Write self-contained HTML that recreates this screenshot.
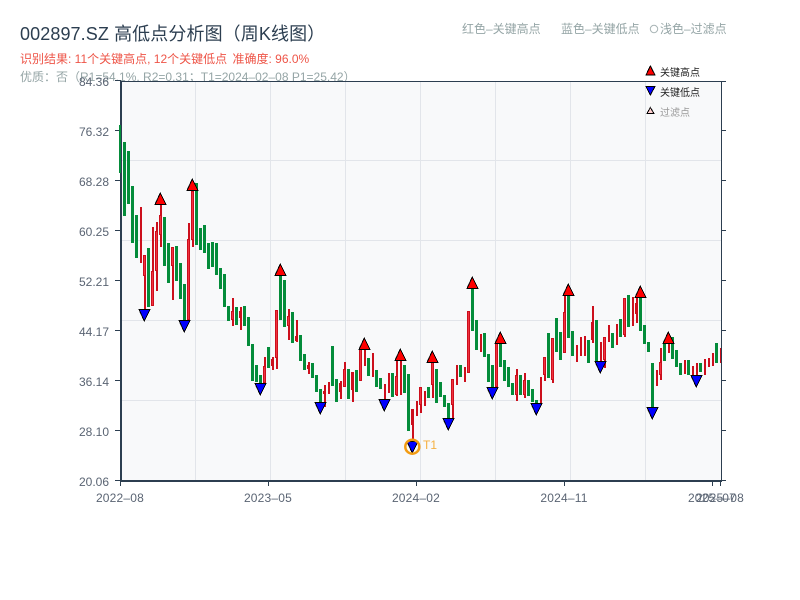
<!DOCTYPE html>
<html lang="zh"><head><meta charset="utf-8"><title>002897.SZ</title>
<style>
html,body{margin:0;padding:0;background:#fff;width:800px;height:600px;overflow:hidden}
svg{display:block}
text{font-family:"Liberation Sans","Noto Sans CJK SC",sans-serif}
</style></head><body>
<svg width="800" height="600" viewBox="0 0 800 600" xmlns="http://www.w3.org/2000/svg">
<rect width="800" height="600" fill="#fff"/>
<text x="20" y="40" font-size="18" fill="#2c3e50" letter-spacing=".1">002897.SZ 高低点分析图（周K线图）</text>
<text x="20" y="63" font-size="12" fill="#ee5548">识别结果: 11个关键高点, 12个关键低点</text>
<text x="232.500" y="63" font-size="12" fill="#ee5548">准确度: 96.0%</text>
<text x="20" y="81" font-size="12" fill="#95a5a6">优质：否（R1=54.1%, R2=0.31；T1=2024–02–08 P1=25.42）</text>
<text x="462" y="33" font-size="12" fill="#95a5a6">红色–关键高点</text>
<text x="561" y="33" font-size="12" fill="#95a5a6">蓝色–关键低点</text>
<circle cx="654" cy="29" r="3.7" fill="none" stroke="#a8b4b5"/>
<text x="660" y="33" font-size="12" fill="#95a5a6">浅色–过滤点</text>

<rect x="121" y="81" width="600" height="400" fill="#f8f9fa"/>
<path d="M195.5 81V481M270.5 81V481M345.5 81V481M420.5 81V481M495.5 81V481M570.5 81V481M645.5 81V481M121 160.5H721M121 240.5H721M121 320.5H721M121 400.5H721" stroke="#e2e5ea" fill="none"/>

<g fill="none" shape-rendering="crispEdges">
<path stroke="#048c3a" stroke-width="3" d="M124.5 142V216M128.5 151V204M132.5 186V243M136.5 215V258M148.5 248V307M164.5 217V266M168.5 243V283M176.5 246V281M180.5 263V299M184.5 284V320M196.5 183V245M200.5 228V250M204.5 225V253M208.5 243V269M212.5 242V267M216.5 243V275M220.5 268V289M224.5 274V307M228.5 306V321M236.5 307V325M244.5 306V326M248.5 317V346M252.5 344V381M256.5 365V382M260.5 375V383M268.5 347V368M280.5 275V320M284.5 280V327M292.5 312V343M300.5 335V361M304.5 354V370M312.5 363V378M316.5 375V392M320.5 389V403M332.5 346V386M336.5 379V402M348.5 369V399M356.5 370V392M368.5 358V376M376.5 370V387M380.5 378V389M392.5 373V397M404.5 365V393M408.5 374V431M428.5 387V398M436.5 369V403M440.5 382V397M444.5 395V407M448.5 403V418M460.5 365V377M472.5 288V331M476.5 320V350M484.5 333V357M488.5 354V382M492.5 365V387M500.5 342V367M504.5 360V381M508.5 367V387M512.5 383V395M520.5 375V395M528.5 380V396M532.5 389V402M536.5 400V405M548.5 333V378M556.5 318V352M560.5 332V360M568.5 296V338M572.5 331V356M588.5 340V363M596.5 320V362M612.5 333V348M620.5 319V337M628.5 295V327M640.5 297V331M644.5 325V344M648.5 342V352M652.5 363V407M664.5 344V361M672.5 337V359M676.5 350V367M680.5 363V375M688.5 360V375M700.5 363V372M716.5 343V363"/>
<path stroke="#cc0f1c" stroke-width="2" d="M141 207V263M145 255V309M153 227V306M157 222V291M161 205V247M173 247V300M189 223V320M193 191V247M233 298V326M241 307V330M265 357V383M273 357V370M277 310V369M289 309V340M297 320V342M309 362V374M325 385V407M329 382V394M341 381V399M345 362V387M353 372V402M361 349V381M365 349V366M373 353V377M385 384V400M389 373V393M397 360V396M401 360V395M413 409V445M417 401V416M421 387V413M425 391V406M433 362V398M453 379V418M457 365V385M465 367V382M469 311V373M481 334V352M497 342V387M517 369V401M525 373V398M541 377V405M545 357V381M553 338V383M565 295V353M577 345V362M581 337V356M585 336V356M593 306V343M601 342V362M605 337V368M609 325V342M617 324V345M625 298V337M633 297V326M637 298V323M657 370V386M661 348V380M669 339V353M685 360V374M693 366V375M697 363V375M705 359V375M709 358V367M713 353V366M721 348V363"/>
<path stroke="#cc0f1c" stroke-width="3" d="M144.500 255V276M152.500 271V306M156.500 231V271M160.500 215V235M172.500 247V266M188.500 239V320M192.500 191V240M232.500 311V320M240.500 311V318M264.500 366V383M272.500 359V366M276.500 310V358M288.500 316V326M296.500 336V341M308.500 365V369M324.500 391V394M340.500 383V392M344.500 369V387M352.500 372V390M360.500 349V381M396.500 376V395M412.500 409V425M420.500 387V405M432.500 362V385M452.500 379V405M468.500 311V373M496.500 342V387M516.500 375V395M524.500 380V395M544.500 357V375M552.500 338V380M564.500 312V353M592.500 322V340M604.500 337V360M624.500 298V335M636.500 303V314M660.500 362V375"/>
<path stroke="#f0323f" stroke-width="1" d="M144.500 256V275M152.500 272V305M156.500 232V270M160.500 216V234M172.500 248V265M188.500 240V319M192.500 192V239M232.500 312V319M264.500 367V382M276.500 311V357M288.500 317V325M344.500 370V386M360.500 350V380M396.500 377V394M420.500 388V404M432.500 363V384M452.500 380V404M468.500 312V372M496.500 343V386M516.500 376V394M524.500 381V394M544.500 358V374M552.500 339V379M564.500 313V352M604.500 338V359M624.500 299V334M660.500 363V374"/>
</g>

<g fill="#ff0000" stroke="#000" stroke-width="1" shape-rendering="crispEdges">
<path d="M160.300 193L155 204.500H166Z"/><path d="M192.300 179L187 190.500H198Z"/><path d="M280.300 264L275 275.500H286Z"/><path d="M364.300 338L359 349.500H370Z"/><path d="M400.300 349L395 360.500H406Z"/><path d="M432.300 351L427 362.500H438Z"/><path d="M472.300 277L467 288.500H478Z"/><path d="M500.300 332L495 343.500H506Z"/><path d="M568.300 284L563 295.500H574Z"/><path d="M640.300 286L635 297.500H646Z"/><path d="M668.300 332L663 343.500H674Z"/>
</g>
<g fill="#0000ff" stroke="#000" stroke-width="1" shape-rendering="crispEdges">
<path d="M144.300 321L139 309.500H150Z"/><path d="M184.300 332L179 320.500H190Z"/><path d="M260.300 395L255 383.500H266Z"/><path d="M320.300 414L315 402.500H326Z"/><path d="M384.300 411L379 399.500H390Z"/><path d="M412.300 453L407 441.500H418Z"/><path d="M448.300 430L443 418.500H454Z"/><path d="M492.300 399L487 387.500H498Z"/><path d="M536.300 415L531 403.500H542Z"/><path d="M600.300 373L595 361.500H606Z"/><path d="M652.300 419L647 407.500H658Z"/><path d="M696.300 387L691 375.500H702Z"/>
</g>
<circle cx="412.300" cy="446.700" r="7" fill="none" stroke="#f39c12" stroke-width="2.500"/>
<text x="423" y="449" font-size="12" fill="#f5b041">T1</text>

<path d="M121 81.500H726M721.500 81V481" stroke="#2c3e50" fill="none"/>
<path d="M121 81V482M120 481H722" stroke="#2c3e50" stroke-width="2" fill="none"/>
<path d="M115 80.500H121M115 130.500H120M115 180.500H120M115 230.500H120M115 280.500H120M115 330.500H120M115 380.500H120M115 430.500H120M115 480.500H120M721 130.500H726M721 180.500H726M721 230.500H726M721 280.500H726M721 330.500H726M721 380.500H726M721 430.500H726M721 480.500H726M120.500 481V486M268.500 481V486M416.500 481V486M564.500 481V486M712.500 481V486M720.500 481V486" stroke="#2c3e50" fill="none"/>
<rect x="119" y="125" width="2" height="48" fill="#048c3a"/>

<g font-size="12" fill="#5a6473" text-anchor="end">
<text x="109" y="86">84.36</text><text x="109" y="136">76.32</text><text x="109" y="186">68.28</text><text x="109" y="236">60.25</text><text x="109" y="286">52.21</text><text x="109" y="336">44.17</text><text x="109" y="386">36.14</text><text x="109" y="436">28.10</text><text x="109" y="486">20.06</text>
</g>
<g font-size="12" fill="#5a6473" text-anchor="middle" letter-spacing=".2">
<text x="120" y="502">2022–08</text><text x="268" y="502">2023–05</text><text x="416" y="502">2024–02</text><text x="564" y="502">2024–11</text><text x="712" y="502">2025–07</text><text x="720" y="502">2025–08</text>
</g>

<path d="M650.300 66L646 75H655Z" fill="#ff0000" stroke="#000" shape-rendering="crispEdges"/>
<text x="660" y="76" font-size="10" fill="#222">关键高点</text>
<path d="M650.300 95L646 86.500H655Z" fill="#0000ff" stroke="#000" shape-rendering="crispEdges"/>
<text x="660" y="96" font-size="10" fill="#222">关键低点</text>
<path d="M650.300 107.500L647 113.500H654Z" fill="#ffd0d0" stroke="#000" shape-rendering="crispEdges"/>
<text x="660" y="116" font-size="10" fill="#999">过滤点</text>
</svg>
</body></html>
